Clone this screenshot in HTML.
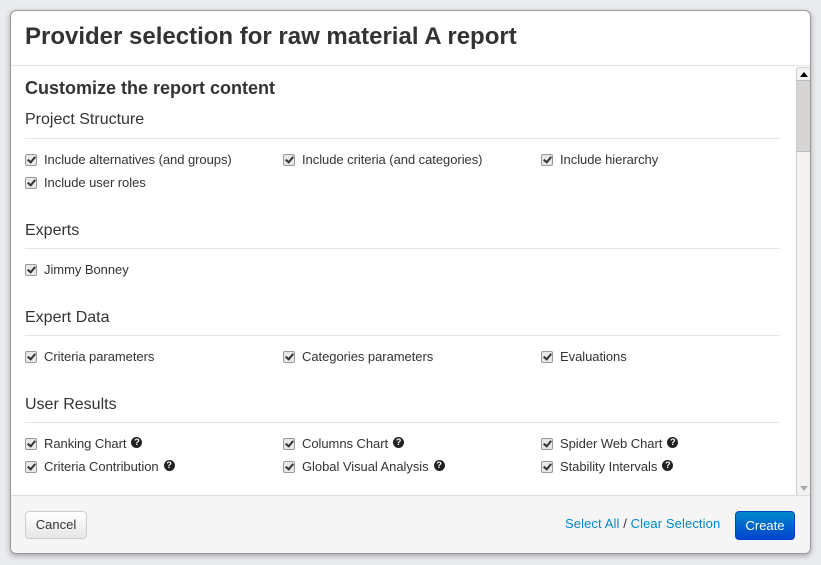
<!DOCTYPE html><html><head><style>
body{margin:0;width:821px;height:565px;background:#e9ebee;font-family:"Liberation Sans",sans-serif;color:#333;position:relative;overflow:hidden}
.m{position:absolute;left:10px;top:10px;width:799px;height:542px;background:#fff;border:1px solid #999;border-radius:6px;box-shadow:0 2px 6px rgba(0,0,0,.3);overflow:hidden}
h1{position:absolute;left:14px;top:12px;margin:0;font-size:24px;font-weight:bold;color:#333}
.hd{position:absolute;left:0;right:0;top:54px;border-top:1px solid #e5e5e5}
.a{position:absolute;white-space:nowrap}
h2{position:absolute;left:14px;margin:0;font-size:18px;font-weight:bold}
.s{position:absolute;left:14px;font-size:16px}
.hr{position:absolute;left:14px;width:755px;border-top:1px solid #e5e5e5}
.c{position:absolute;font-size:13px;white-space:nowrap;display:flex;align-items:center;letter-spacing:-0.05px}
.c i{display:inline-block;width:10px;height:10px;border:1px solid #999;border-radius:2px;background:#e8e8e8;margin-right:7px;position:relative}
.c i:after{content:"";position:absolute;left:3px;top:0px;width:3px;height:6px;border:solid #333;border-width:0 2px 2px 0;transform:rotate(40deg)}
.q{display:inline-block;width:11px;height:11px;border-radius:50%;background:#222;color:#fff;font-size:9px;font-weight:bold;text-align:center;line-height:11px;margin-left:5px;margin-top:-3px}
.ft{position:absolute;left:0;right:0;top:484px;bottom:0;background:#f5f5f5;border-top:1px solid #ddd}
.sb{position:absolute;left:785px;top:56px;width:13px;height:427px;background:#f3f2f0;border:1px solid #ccc;border-radius:3px}
</style></head><body><div class="m">
<h1>Provider selection for raw material A report</h1>
<div class="hd"></div>
<h2 style="top:67px">Customize the report content</h2>
<div class="s" style="top:100px">Project Structure</div><div class="hr" style="top:127px"></div>
<div class="c" style="left:14px;top:141px"><i></i>Include alternatives (and groups)</div>
<div class="c" style="left:272px;top:141px"><i></i>Include criteria (and categories)</div>
<div class="c" style="left:530px;top:141px"><i></i>Include hierarchy</div>
<div class="c" style="left:14px;top:164px"><i></i>Include user roles</div>
<div class="s" style="top:211px">Experts</div><div class="hr" style="top:237px"></div>
<div class="c" style="left:14px;top:251px"><i></i>Jimmy Bonney</div>
<div class="s" style="top:298px">Expert Data</div><div class="hr" style="top:324px"></div>
<div class="c" style="left:14px;top:338px"><i></i>Criteria parameters</div>
<div class="c" style="left:272px;top:338px"><i></i>Categories parameters</div>
<div class="c" style="left:530px;top:338px"><i></i>Evaluations</div>
<div class="s" style="top:385px">User Results</div><div class="hr" style="top:411px"></div>
<div class="c" style="left:14px;top:425px"><i></i>Ranking Chart<span class="q">?</span></div>
<div class="c" style="left:272px;top:425px"><i></i>Columns Chart<span class="q">?</span></div>
<div class="c" style="left:530px;top:425px"><i></i>Spider Web Chart<span class="q">?</span></div>
<div class="c" style="left:14px;top:448px"><i></i>Criteria Contribution<span class="q">?</span></div>
<div class="c" style="left:272px;top:448px"><i></i>Global Visual Analysis<span class="q">?</span></div>
<div class="c" style="left:530px;top:448px"><i></i>Stability Intervals<span class="q">?</span></div>
<div class="sb"><div style="position:absolute;left:0;right:0;top:12px;height:70px;background:#d6d5d3;border-top:1px solid #bbb;border-bottom:1px solid #bbb"></div>
<div style="position:absolute;left:3px;top:4px;border:4px solid transparent;border-bottom:5px solid #000;border-top:0"></div>
<div style="position:absolute;left:3px;bottom:4px;border:4px solid transparent;border-top:5px solid #aaa;border-bottom:0"></div></div>
<div class="ft">
<div class="a" style="left:14px;top:15px;width:60px;height:26px;border:1px solid #ccc;border-radius:4px;background:linear-gradient(#fff,#e6e6e6);font-size:13px;text-align:center;line-height:26px">Cancel</div>
<div class="a" style="left:554px;top:20px;font-size:13px;color:#0088cc;letter-spacing:0.1px">Select All <span style="color:#333">/</span> Clear Selection</div>
<div class="a" style="left:724px;top:15px;width:58px;height:27px;border:1px solid #04c;border-radius:4px;background:linear-gradient(#08c,#04c);color:#fff;font-size:13px;text-align:center;line-height:27px">Create</div>
</div></div></body></html>
